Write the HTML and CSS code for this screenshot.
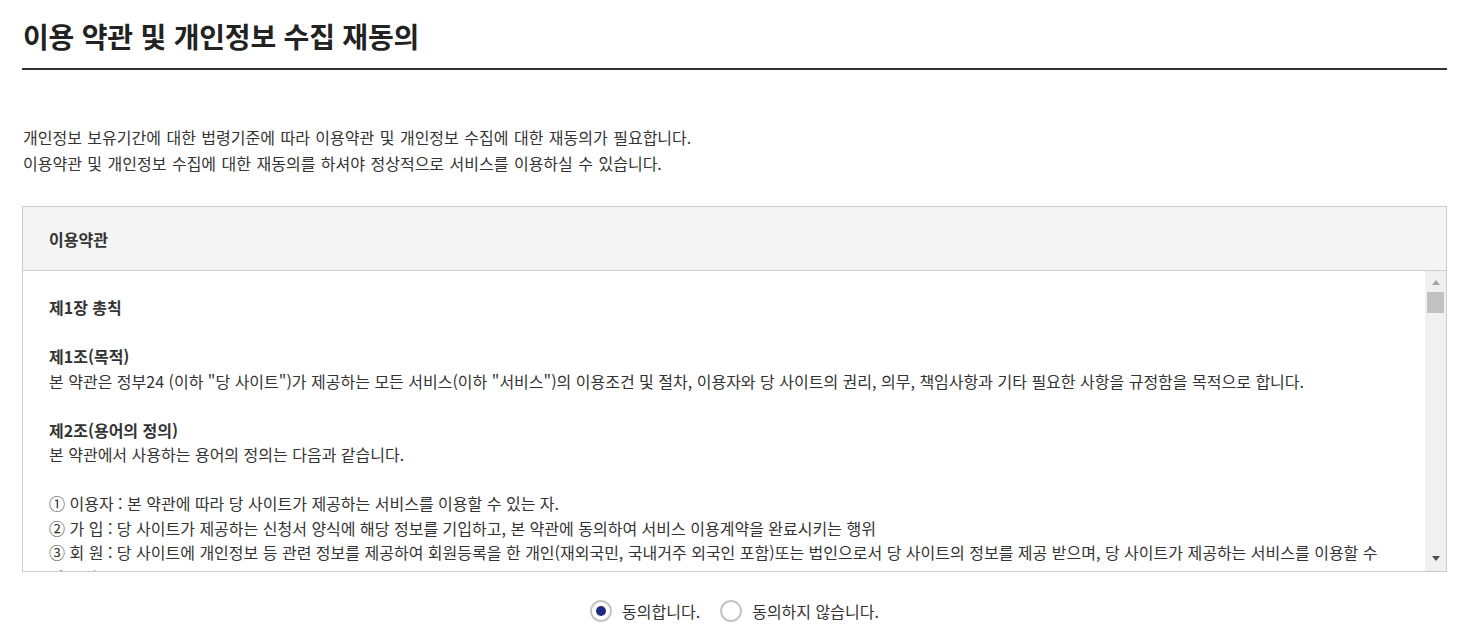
FILE: index.html
```html
<!DOCTYPE html>
<html lang="ko">
<head>
<meta charset="utf-8">
<title>이용 약관 및 개인정보 수집 재동의</title>
<link rel="stylesheet" href="styles.css">
</head>
<body>
<div class="page">
  <h1 class="title">이용 약관 및 개인정보 수집 재동의</h1>
  <p class="intro">개인정보 보유기간에 대한 법령기준에 따라 이용약관 및 개인정보 수집에 대한 재동의가 필요합니다.<br>이용약관 및 개인정보 수집에 대한 재동의를 하셔야 정상적으로 서비스를 이용하실 수 있습니다.</p>
  <div class="terms">
    <div class="terms-head">이용약관</div>
    <div class="terms-body">
      <div class="terms-text">
        <p class="strong">제1장 총칙</p>
        <p class="gap"></p>
        <p class="strong">제1조(목적)</p>
        <p>본 약관은 정부24 (이하 "당 사이트")가 제공하는 모든 서비스(이하 "서비스")의 이용조건 및 절차, 이용자와 당 사이트의 권리, 의무, 책임사항과 기타 필요한 사항을 규정함을 목적으로 합니다.</p>
        <p class="gap"></p>
        <p class="strong">제2조(용어의 정의)</p>
        <p>본 약관에서 사용하는 용어의 정의는 다음과 같습니다.</p>
        <p class="gap"></p>
        <p>① 이용자 : 본 약관에 따라 당 사이트가 제공하는 서비스를 이용할 수 있는 자.</p>
        <p>② 가 입 : 당 사이트가 제공하는 신청서 양식에 해당 정보를 기입하고, 본 약관에 동의하여 서비스 이용계약을 완료시키는 행위</p>
        <p>③ 회 원 : 당 사이트에 개인정보 등 관련 정보를 제공하여 회원등록을 한 개인(재외국민, 국내거주 외국인 포함)또는 법인으로서 당 사이트의 정보를 제공 받으며, 당 사이트가 제공하는 서비스를 이용할 수 있는 자.</p>
      </div>
      <div class="scrollbar">
        <span class="arrow up"></span>
        <span class="track"><span class="thumb"></span></span>
        <span class="arrow down"></span>
      </div>
    </div>
  </div>
  <div class="agree">
    <label class="opt"><span class="radio checked"></span>동의합니다.</label>
    <label class="opt"><span class="radio"></span>동의하지 않습니다.</label>
  </div>
</div>
</body>
</html>
```
FILE: styles.css
```css
html, body {
  margin: 0;
  padding: 0;
  background: #fff;
}
body {
  font-family: "Noto Sans CJK KR", "Noto Sans", sans-serif;
  color: #333;
}
.page {
  padding: 0 21px 0 22px;
}
.title {
  margin: 0;
  padding: 17px 0 13px 1px;
  font-size: 28px;
  line-height: 38px;
  font-weight: 700;
  letter-spacing: -0.2px;
  color: #222;
  border-bottom: 2px solid #333;
}
.intro {
  margin: 54px 0 0 1px;
  font-size: 16px;
  line-height: 26px;
  word-spacing: 1px;
  color: #333;
}
.terms {
  margin-top: 30px;
  border: 1px solid #ccc;
}
.terms-head {
  background: #f4f4f4;
  border-bottom: 1px solid #ccc;
  height: 63px;
  display: flex;
  align-items: center;
  padding-left: 26px;
  font-size: 16px;
  font-weight: 700;
  color: #333;
}
.terms-body {
  display: flex;
  height: 300px;
  overflow: hidden;
}
.terms-text {
  flex: 1;
  padding: 24px 26px 0 26px;
  font-size: 16px;
  line-height: 24.5px;
  color: #333;
  word-break: keep-all;
  overflow: hidden;
}
.terms-text p {
  margin: 0;
}
.terms-text .gap {
  height: 24.5px;
}
.terms-text .strong {
  font-weight: 700;
}
.scrollbar {
  width: 21px;
  background: #f0f0f0;
  display: flex;
  flex-direction: column;
  align-items: center;
}
.arrow {
  width: 0;
  height: 0;
  border-left: 4.5px solid transparent;
  border-right: 4.5px solid transparent;
}
.arrow.up {
  margin-top: 9px;
  border-bottom: 5px solid #a3a3a3;
}
.arrow.down {
  margin-bottom: 10px;
  border-top: 5px solid #505050;
}
.track {
  flex: 1;
  width: 100%;
  padding-top: 7px;
}
.thumb {
  display: block;
  margin: 0 auto;
  width: 17px;
  height: 21px;
  background: #c1c1c1;
}
.agree {
  display: flex;
  justify-content: center;
  gap: 20px;
  padding-top: 27px;
  font-size: 16px;
  color: #333;
}
.opt {
  display: flex;
  align-items: center;
  gap: 10px;
  line-height: 24px;
}
.radio {
  width: 18px;
  height: 18px;
  border: 2px solid #c4c4c4;
  border-radius: 50%;
  box-sizing: content-box;
  display: flex;
  align-items: center;
  justify-content: center;
  background: #fff;
}
.radio.checked::after {
  content: "";
  width: 10px;
  height: 10px;
  border-radius: 50%;
  background: #1f2a80;
}
```
